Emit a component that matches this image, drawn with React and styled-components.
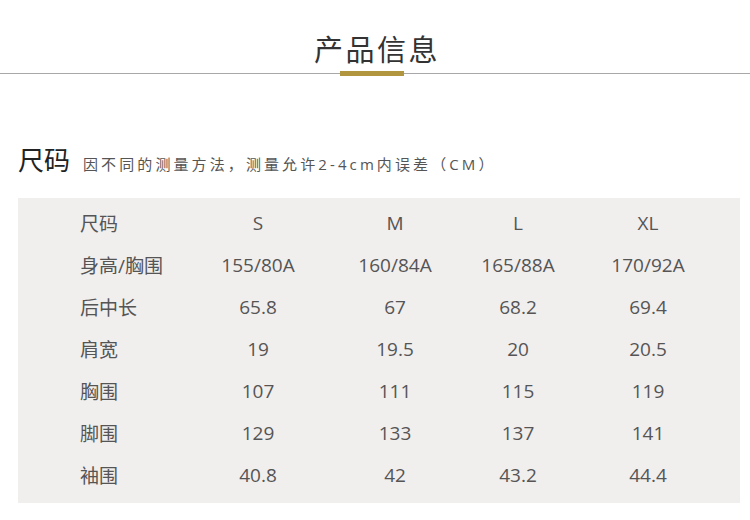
import React from "react";
import styled, { createGlobalStyle } from "styled-components";

const Global = createGlobalStyle`
  html, body { margin: 0; padding: 0; background: #fff; }
  body { font-family: "Open Sans", "Noto Sans CJK SC", sans-serif; }
`;

const Page = styled.div`
  width: 750px;
  height: 520px;
  background: #fff;
  display: flex;
  flex-direction: column;
`;

const Header = styled.div`
  position: relative;
  height: 74px;
  display: flex;
  justify-content: center;
  align-items: flex-start;
  border-bottom: 1px solid #a8a8a8;
  box-sizing: border-box;
`;

const Title = styled.h1`
  margin: 0;
  padding-top: 29px;
  padding-left: 4px;
  font-family: "Noto Sans CJK SC", sans-serif;
  font-weight: 400;
  font-size: 29px;
  line-height: 38px;
  letter-spacing: 2.5px;
  color: #333;
`;

const GoldBar = styled.div`
  position: absolute;
  left: 340px;
  bottom: -3px;
  width: 64px;
  height: 5px;
  background: #b2963f;
`;

const Section = styled.div`
  padding: 68px 10px 0 18px;
`;

const SizeHead = styled.div`
  display: flex;
  align-items: baseline;
  gap: 13px;
  height: 56px;
`;

const SizeTitle = styled.span`
  font-family: "Noto Sans CJK SC", sans-serif;
  font-size: 26px;
  color: #222;
  line-height: 34px;
`;

const SizeNote = styled.span`
  font-family: "Open Sans", "Noto Sans CJK SC", sans-serif;
  font-size: 15px;
  letter-spacing: 3.1px;
  text-spacing-trim: space-all;
  color: #555;
`;

const Table = styled.div`
  background: #f1eeee;
  width: 722px;
  padding: 4px 0 7px 62px;
  box-sizing: border-box;
  display: grid;
  grid-template-columns: 110px 136px 138px 108px 152px;
  grid-auto-rows: 42px;
`;

const Cell = styled.div`
  display: flex;
  align-items: center;
  justify-content: ${(p) => (p.$label ? "flex-start" : "center")};
  font-family: "Open Sans", "Noto Sans CJK SC", sans-serif;
  font-size: 19px;
  color: #555;
  white-space: nowrap;
`;

const rows = [
  ["尺码", "S", "M", "L", "XL"],
  ["身高/胸围", "155/80A", "160/84A", "165/88A", "170/92A"],
  ["后中长", "65.8", "67", "68.2", "69.4"],
  ["肩宽", "19", "19.5", "20", "20.5"],
  ["胸围", "107", "111", "115", "119"],
  ["脚围", "129", "133", "137", "141"],
  ["袖围", "40.8", "42", "43.2", "44.4"],
];

export default function App() {
  return (
    <Page>
      <Global />
      <Header>
        <Title>产品信息</Title>
        <GoldBar />
      </Header>
      <Section>
        <SizeHead>
          <SizeTitle>尺码</SizeTitle>
          <SizeNote>因不同的测量方法，测量允许2-4cm内误差（CM）</SizeNote>
        </SizeHead>
        <Table>
          {rows.map((r, i) =>
            r.map((c, j) => (
              <Cell key={`${i}-${j}`} $label={j === 0}>
                {c}
              </Cell>
            ))
          )}
        </Table>
      </Section>
    </Page>
  );
}
